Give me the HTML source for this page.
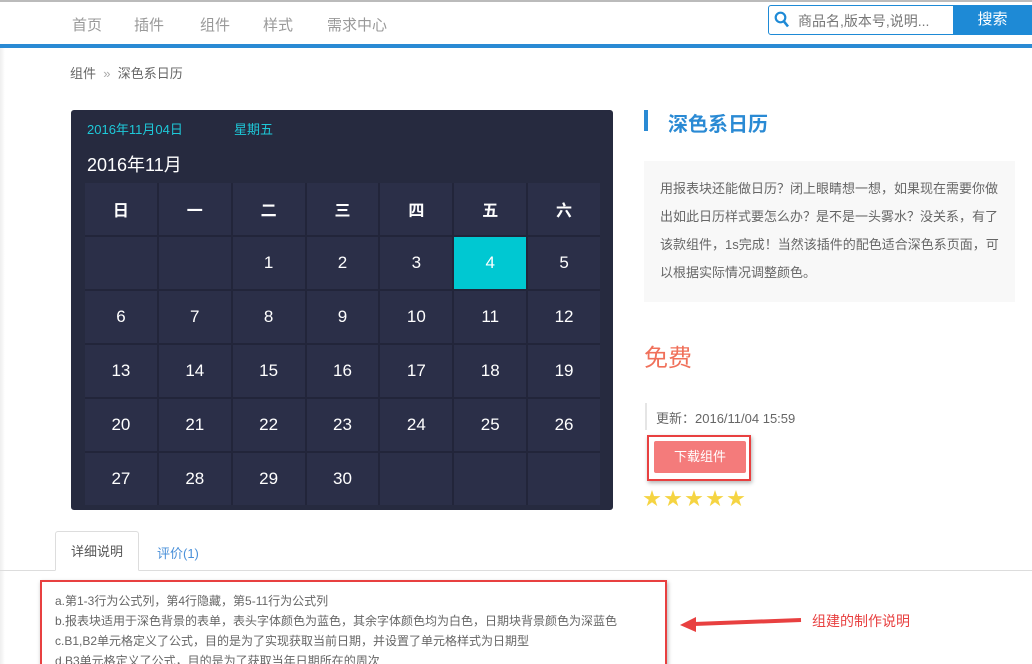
<!DOCTYPE html>
<html><head><meta charset="utf-8"><style>
*{margin:0;padding:0;box-sizing:border-box}
html,body{width:1032px;height:664px;overflow:hidden}
body{background:#fff;font-family:"Liberation Sans","Noto Sans CJK SC",sans-serif;color:#555}
#w{position:relative;width:1032px;height:664px;overflow:hidden}
.a{position:absolute}
.nav span{position:absolute;top:14px;font-size:15px;color:#999}
.cal{left:71px;top:110px;width:542px;height:400px;background:#262a3f;border-radius:3px;overflow:hidden}
.grid{position:absolute;left:14px;top:73px;width:515px;display:grid;grid-template-columns:repeat(7,1fr);gap:2px;background:#22253a}
.grid div{background:#2b2f48;height:52px;color:#fff;font-size:17px;display:flex;align-items:center;justify-content:center}
.grid .h{font-weight:bold;font-size:16px}
.grid .t{background:#00c8d2}
.d{font-size:12px;color:#666;line-height:20px}
</style></head><body><div id="w">
<div class="a" style="left:0;top:0;width:1032px;height:2px;background:#bbb"></div>
<div class="nav"><span style="left:72px">首页</span><span style="left:134px">插件</span><span style="left:200px">组件</span><span style="left:263px">样式</span><span style="left:327px">需求中心</span></div>
<div class="a" style="left:768px;top:5px;width:186px;height:30px;border:1px solid #1e8ad6;border-radius:3px 0 0 3px;background:#fff"></div>
<svg class="a" style="left:774px;top:11px" width="16" height="18" viewBox="0 0 16 18"><circle cx="6.5" cy="6.5" r="4.8" fill="none" stroke="#1e8ad6" stroke-width="2.2"/><path d="M10 10.5 L14 15.5" stroke="#1e8ad6" stroke-width="2.6"/></svg>
<div class="a" style="left:798px;top:11px;font-size:14px;color:#777">商品名,版本号,说明...</div>
<div class="a" style="left:953px;top:5px;width:79px;height:30px;background:#1e8ad6;color:#fff;font-size:15px;text-align:center;line-height:30px">搜索</div>
<div class="a" style="left:0;top:44px;width:1032px;height:4px;background:#2a8ad4"></div>
<div class="a" style="left:0;top:48px;width:5px;height:616px;background:linear-gradient(90deg,#eee,#fff)"></div>
<div class="a" style="left:70px;top:63px;font-size:13px;color:#666">组件 <span style="color:#aaa">&nbsp;»&nbsp;</span> 深色系日历</div>
<div class="a cal">
<div class="a" style="left:16px;top:9px;font-size:13px;color:#1ec8d8">2016年11月04日</div>
<div class="a" style="left:163px;top:9px;font-size:13px;color:#1ec8d8">星期五</div>
<div class="a" style="left:16px;top:41px;font-size:18px;color:#fff">2016年11月</div>
<div class="grid">
<div class="h">日</div><div class="h">一</div><div class="h">二</div><div class="h">三</div><div class="h">四</div><div class="h">五</div><div class="h">六</div>
<div></div><div></div><div>1</div><div>2</div><div>3</div><div class="t">4</div><div>5</div>
<div>6</div><div>7</div><div>8</div><div>9</div><div>10</div><div>11</div><div>12</div>
<div>13</div><div>14</div><div>15</div><div>16</div><div>17</div><div>18</div><div>19</div>
<div>20</div><div>21</div><div>22</div><div>23</div><div>24</div><div>25</div><div>26</div>
<div>27</div><div>28</div><div>29</div><div>30</div><div></div><div></div><div></div>
</div></div>
<div class="a" style="left:644px;top:110px;width:4px;height:21px;background:#2a8ad4"></div>
<div class="a" style="left:668px;top:108px;font-size:20px;font-weight:bold;color:#2a8ad4">深色系日历</div>
<div class="a" style="left:644px;top:161px;width:371px;height:141px;background:#f8f8f8;padding:14px 14px 0 16px;font-size:13px;line-height:28px;color:#666">用报表块还能做日历？闭上眼睛想一想，如果现在需要你做出如此日历样式要怎么办？是不是一头雾水？没关系，有了该款组件，1s完成！当然该插件的配色适合深色系页面，可以根据实际情况调整颜色。</div>
<div class="a" style="left:644px;top:338px;font-size:24px;color:#f0705a">免费</div>
<div class="a" style="left:645px;top:403px;width:2px;height:27px;background:#e5e5e5"></div>
<div class="a" style="left:656px;top:408px;font-size:13px;color:#666">更新：2016/11/04 15:59</div>
<div class="a" style="left:647px;top:435px;width:104px;height:46px;border:2px solid #e84040;box-shadow:1px 2px 4px rgba(0,0,0,.3)"></div>
<div class="a" style="left:654px;top:441px;width:92px;height:32px;background:#f47b7b;border-radius:2px;color:#fff;font-size:13px;text-align:center;line-height:32px">下载组件</div>
<div class="a" style="left:643px;top:485px;font-size:18px;color:#f5d442;letter-spacing:3px">★★★★★</div>
<div class="a" style="left:0;top:570px;width:1032px;height:1px;background:#ddd"></div>
<div class="a" style="left:55px;top:531px;width:84px;height:40px;border:1px solid #ddd;border-bottom:1px solid #fff;border-radius:3px 3px 0 0;background:#fff;font-size:13px;color:#555;text-align:center;line-height:40px">详细说明</div>
<div class="a" style="left:157px;top:543px;font-size:13px;color:#4a90d9">评价(1)</div>
<div class="a" style="left:40px;top:580px;width:627px;height:100px;border:2px solid #e84040;box-shadow:1px 2px 4px rgba(0,0,0,.3)"></div>
<div class="a d" style="left:55px;top:591px">a.第1-3行为公式列，第4行隐藏，第5-11行为公式列<br>b.报表块适用于深色背景的表单，表头字体颜色为蓝色，其余字体颜色均为白色，日期块背景颜色为深蓝色<br>c.B1,B2单元格定义了公式，目的是为了实现获取当前日期，并设置了单元格样式为日期型<br>d.B3单元格定义了公式，目的是为了获取当年日期所在的周次</div>
<svg class="a" style="left:676px;top:612px" width="130" height="22"><path d="M125 8 L18 12" stroke="#e84040" stroke-width="4"/><path d="M4 13 L20 5 L20 20 Z" fill="#e84040"/></svg>
<div class="a" style="left:812px;top:611px;font-size:14px;color:#e84040">组建的制作说明</div>
</div></body></html>
